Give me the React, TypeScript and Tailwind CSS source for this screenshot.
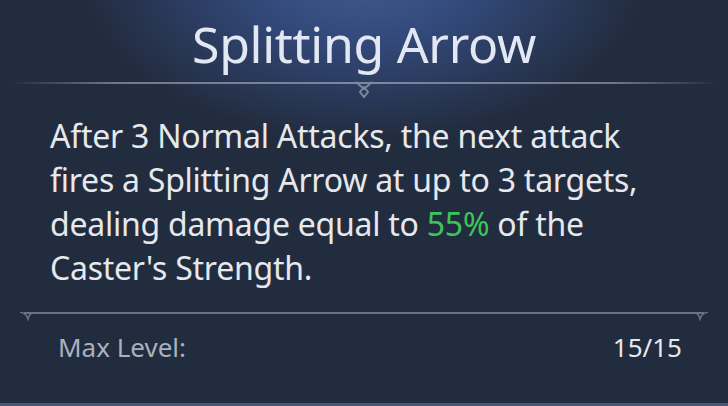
export default function App() {
  return (
    <div className="relative w-[728px] h-[406px] overflow-hidden bg-[#222c3f] font-['Noto_Sans',sans-serif]">
      {/* top glow */}
      <div className="pointer-events-none absolute left-1/2 top-[-190px] w-[560px] h-[330px] -translate-x-1/2 rounded-full bg-[radial-gradient(closest-side,#405b91_0%,#33497a_40%,rgba(34,44,63,0)_100%)]" />

      <div className="relative flex flex-col h-full">
        <h1 className="mt-[19px] text-center text-[50px] leading-[50px] text-[#e2e8f3] tracking-[-0.3px]">Splitting Arrow</h1>

        {/* title divider */}
        <div className="relative mt-[13px] h-[2px] mx-[10px] bg-[linear-gradient(90deg,rgba(110,122,145,0)_0%,#6e7a91_15%,#7e889c_50%,#6e7a91_85%,rgba(110,122,145,0)_100%)]">
          <svg className="absolute left-1/2 top-[-1px] -translate-x-1/2" width="22" height="18" viewBox="0 0 22 18">
            <path d="M3 1 L11 8 L19 1" fill="none" stroke="#7e889c" strokeWidth="2" />
            <path d="M11 6 L15 11 L11 16 L7 11 Z" fill="none" stroke="#7e889c" strokeWidth="2" />
          </svg>
        </div>

        <p className="mt-[30px] px-[50px] text-[32px] leading-[44px] text-[#e6e8ec] tracking-[-0.25px]">
          After 3 Normal Attacks, the next attack
          <br />
          fires a Splitting Arrow at up to 3 targets,
          <br />
          dealing damage equal to <span className="text-[#3ec35a]">55%</span> of the
          <br />
          Caster's Strength.
        </p>

        {/* bottom divider */}
        <div className="relative mt-[22px] mx-[24px] h-[2px] bg-[#66738a]">
          <svg className="absolute left-[-4px] top-0" width="14" height="10" viewBox="0 0 14 10">
            <path d="M0 0 Q6 1 8 7 Q9 2 14 0" fill="none" stroke="#66738a" strokeWidth="1.5" />
          </svg>
          <svg className="absolute right-[-4px] top-0" width="14" height="10" viewBox="0 0 14 10">
            <path d="M0 0 Q5 2 6 7 Q8 1 14 0" fill="none" stroke="#66738a" strokeWidth="1.5" />
          </svg>
        </div>

        <div className="mt-[20px] flex justify-between items-center pl-[58px] pr-[46px] text-[26px] leading-[26px]">
          <span className="text-[#a9b1bf]">Max Level:</span>
          <span className="text-[#e6e8ec]">15/15</span>
        </div>
      </div>

      <div className="absolute bottom-0 left-0 right-0 h-[3px] bg-[#4a5878]" />
    </div>
  )
}
